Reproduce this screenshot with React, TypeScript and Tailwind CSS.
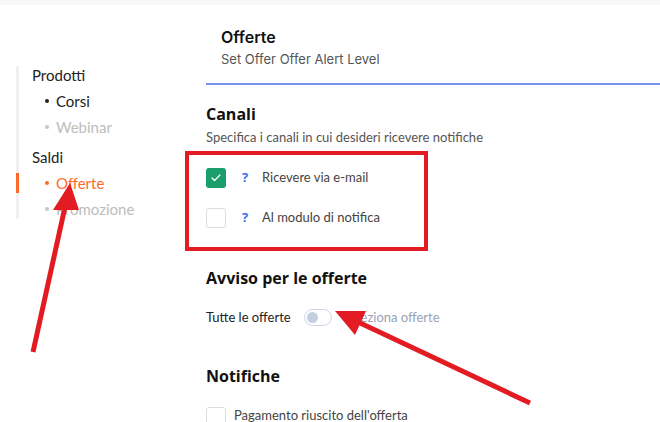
import { Check } from 'lucide-react';

const sidebar = [
  { label: 'Prodotti', group: true },
  { label: 'Corsi', state: 'on' },
  { label: 'Webinar', state: 'off' },
  { label: 'Saldi', group: true },
  { label: 'Offerte', state: 'active' },
  { label: 'Promozione', state: 'off' },
];

function Sidebar() {
  return (
    <aside className="w-[206px] shrink-0 pt-[57px] pl-4">
      <div className="relative pl-[16px] font-['Lato',sans-serif] text-[15px]">
        <span className="absolute left-0 top-[4px] bottom-[3px] w-[3px] bg-[#f0f0f0]" />
        {sidebar.map((item) =>
          item.group ? (
            <div
              key={item.label}
              className={`h-[26px] leading-[26px] text-[#222] ${item.label === 'Saldi' ? 'mt-[4px]' : ''}`}
            >
              {item.label}
            </div>
          ) : (
            <div
              key={item.label}
              className={`relative flex h-[26px] items-center pl-[13px] leading-[26px] ${
                item.state === 'on'
                  ? 'text-[#222]'
                  : item.state === 'active'
                    ? 'text-[#ff6a2b]'
                    : 'text-[#bdbdbd]'
              }`}
            >
              {item.state === 'active' && (
                <span className="absolute left-[-16px] top-[3px] h-[20px] w-[3px] bg-[#ff6a2b]" />
              )}
              <span
                className={`mr-[7px] h-[4px] w-[4px] rounded-full ${
                  item.state === 'on' ? 'bg-[#222]' : item.state === 'active' ? 'bg-[#ff6a2b]' : 'bg-[#c4c4c4]'
                }`}
              />
              {item.label}
            </div>
          ),
        )}
      </div>
    </aside>
  );
}

function Box({ checked }: { checked?: boolean }) {
  return checked ? (
    <span className="flex h-5 w-5 items-center justify-center rounded-[3px] bg-[#1a9e6c]">
      <Check className="h-3 w-3 text-white" strokeWidth={2.5} />
    </span>
  ) : (
    <span className="h-5 w-5 rounded-[3px] border border-[#dcdcdc] bg-white" />
  );
}

function Arrows() {
  return (
    <svg className="pointer-events-none absolute inset-0" width="660" height="422" viewBox="0 0 660 422">
      <rect x="187" y="153" width="239" height="96" fill="none" stroke="#e31b23" strokeWidth="4" />
      <line x1="33" y1="352" x2="65" y2="207" stroke="#e31b23" strokeWidth="5" />
      <polygon points="70,183 53,210 79,210" fill="#e31b23" />
      <line x1="530" y1="403" x2="358" y2="322" stroke="#e31b23" strokeWidth="5" />
      <polygon points="335,311 366,311 355,335" fill="#e31b23" />
    </svg>
  );
}

export default function App() {
  return (
    <div className="relative h-[422px] w-[660px] overflow-hidden bg-white">
      <div className="h-[5px] bg-[#f8f8f8]" />
      <div className="flex">
        <Sidebar />
        <main className="flex-1">
          <div className="px-[15px] pt-[22px] font-['Inter',sans-serif]">
            <h1 className="text-[16px] leading-[20px] font-semibold text-[#111]">Offerte</h1>
            <p className="mt-[3px] text-[13px] leading-[18px] text-[#555]">Set Offer Offer Alert Level</p>
          </div>
          <div className="mt-[15px] h-[2px] bg-[#7890ec]" />

          <section className="font-['Lato',sans-serif]">
            <h2 className="mt-[18px] font-['Open_Sans',sans-serif] text-[16px] leading-[22px] font-bold text-[#111]">
              Canali
            </h2>
            <p className="mt-[3px] text-[13px] leading-[18px] text-[#555]">
              Specifica i canali in cui desideri ricevere notifiche
            </p>
            <div className="mt-[22px] flex flex-col gap-[20px]">
              {[
                { label: 'Ricevere via e-mail', checked: true },
                { label: 'Al modulo di notifica', checked: false },
              ].map((r) => (
                <div key={r.label} className="flex h-5 items-center text-[13px] text-[#444]">
                  <Box checked={r.checked} />
                  <span className="ml-[16px] w-[20px] font-['Open_Sans',sans-serif] font-bold text-[#3b6ef5]">?</span>
                  <span>{r.label}</span>
                </div>
              ))}
            </div>

            <h2 className="mt-[39px] font-['Open_Sans',sans-serif] text-[16px] leading-[22px] font-bold text-[#111]">
              Avviso per le offerte
            </h2>
            <div className="mt-[19px] flex items-center text-[13px]">
              <span className="text-[#222]">Tutte le offerte</span>
              <span className="ml-[13px] flex h-[17px] w-[28px] items-center rounded-full border border-[#c9d6ea] bg-white pl-[2px]">
                <span className="h-[11px] w-[11px] rounded-full bg-[#c3cfe0]" />
              </span>
              <span className="ml-[12px] text-[#9aa3b4]">Seleziona offerte</span>
            </div>

            <h2 className="mt-[37px] font-['Open_Sans',sans-serif] text-[16px] leading-[22px] font-bold text-[#111]">
              Notifiche
            </h2>
            <div className="mt-[20px] flex items-start text-[13px] text-[#444]">
              <Box />
              <span className="ml-[8px] leading-[16px]">Pagamento riuscito dell'offerta</span>
            </div>
          </section>
        </main>
      </div>
      <Arrows />
    </div>
  );
}
